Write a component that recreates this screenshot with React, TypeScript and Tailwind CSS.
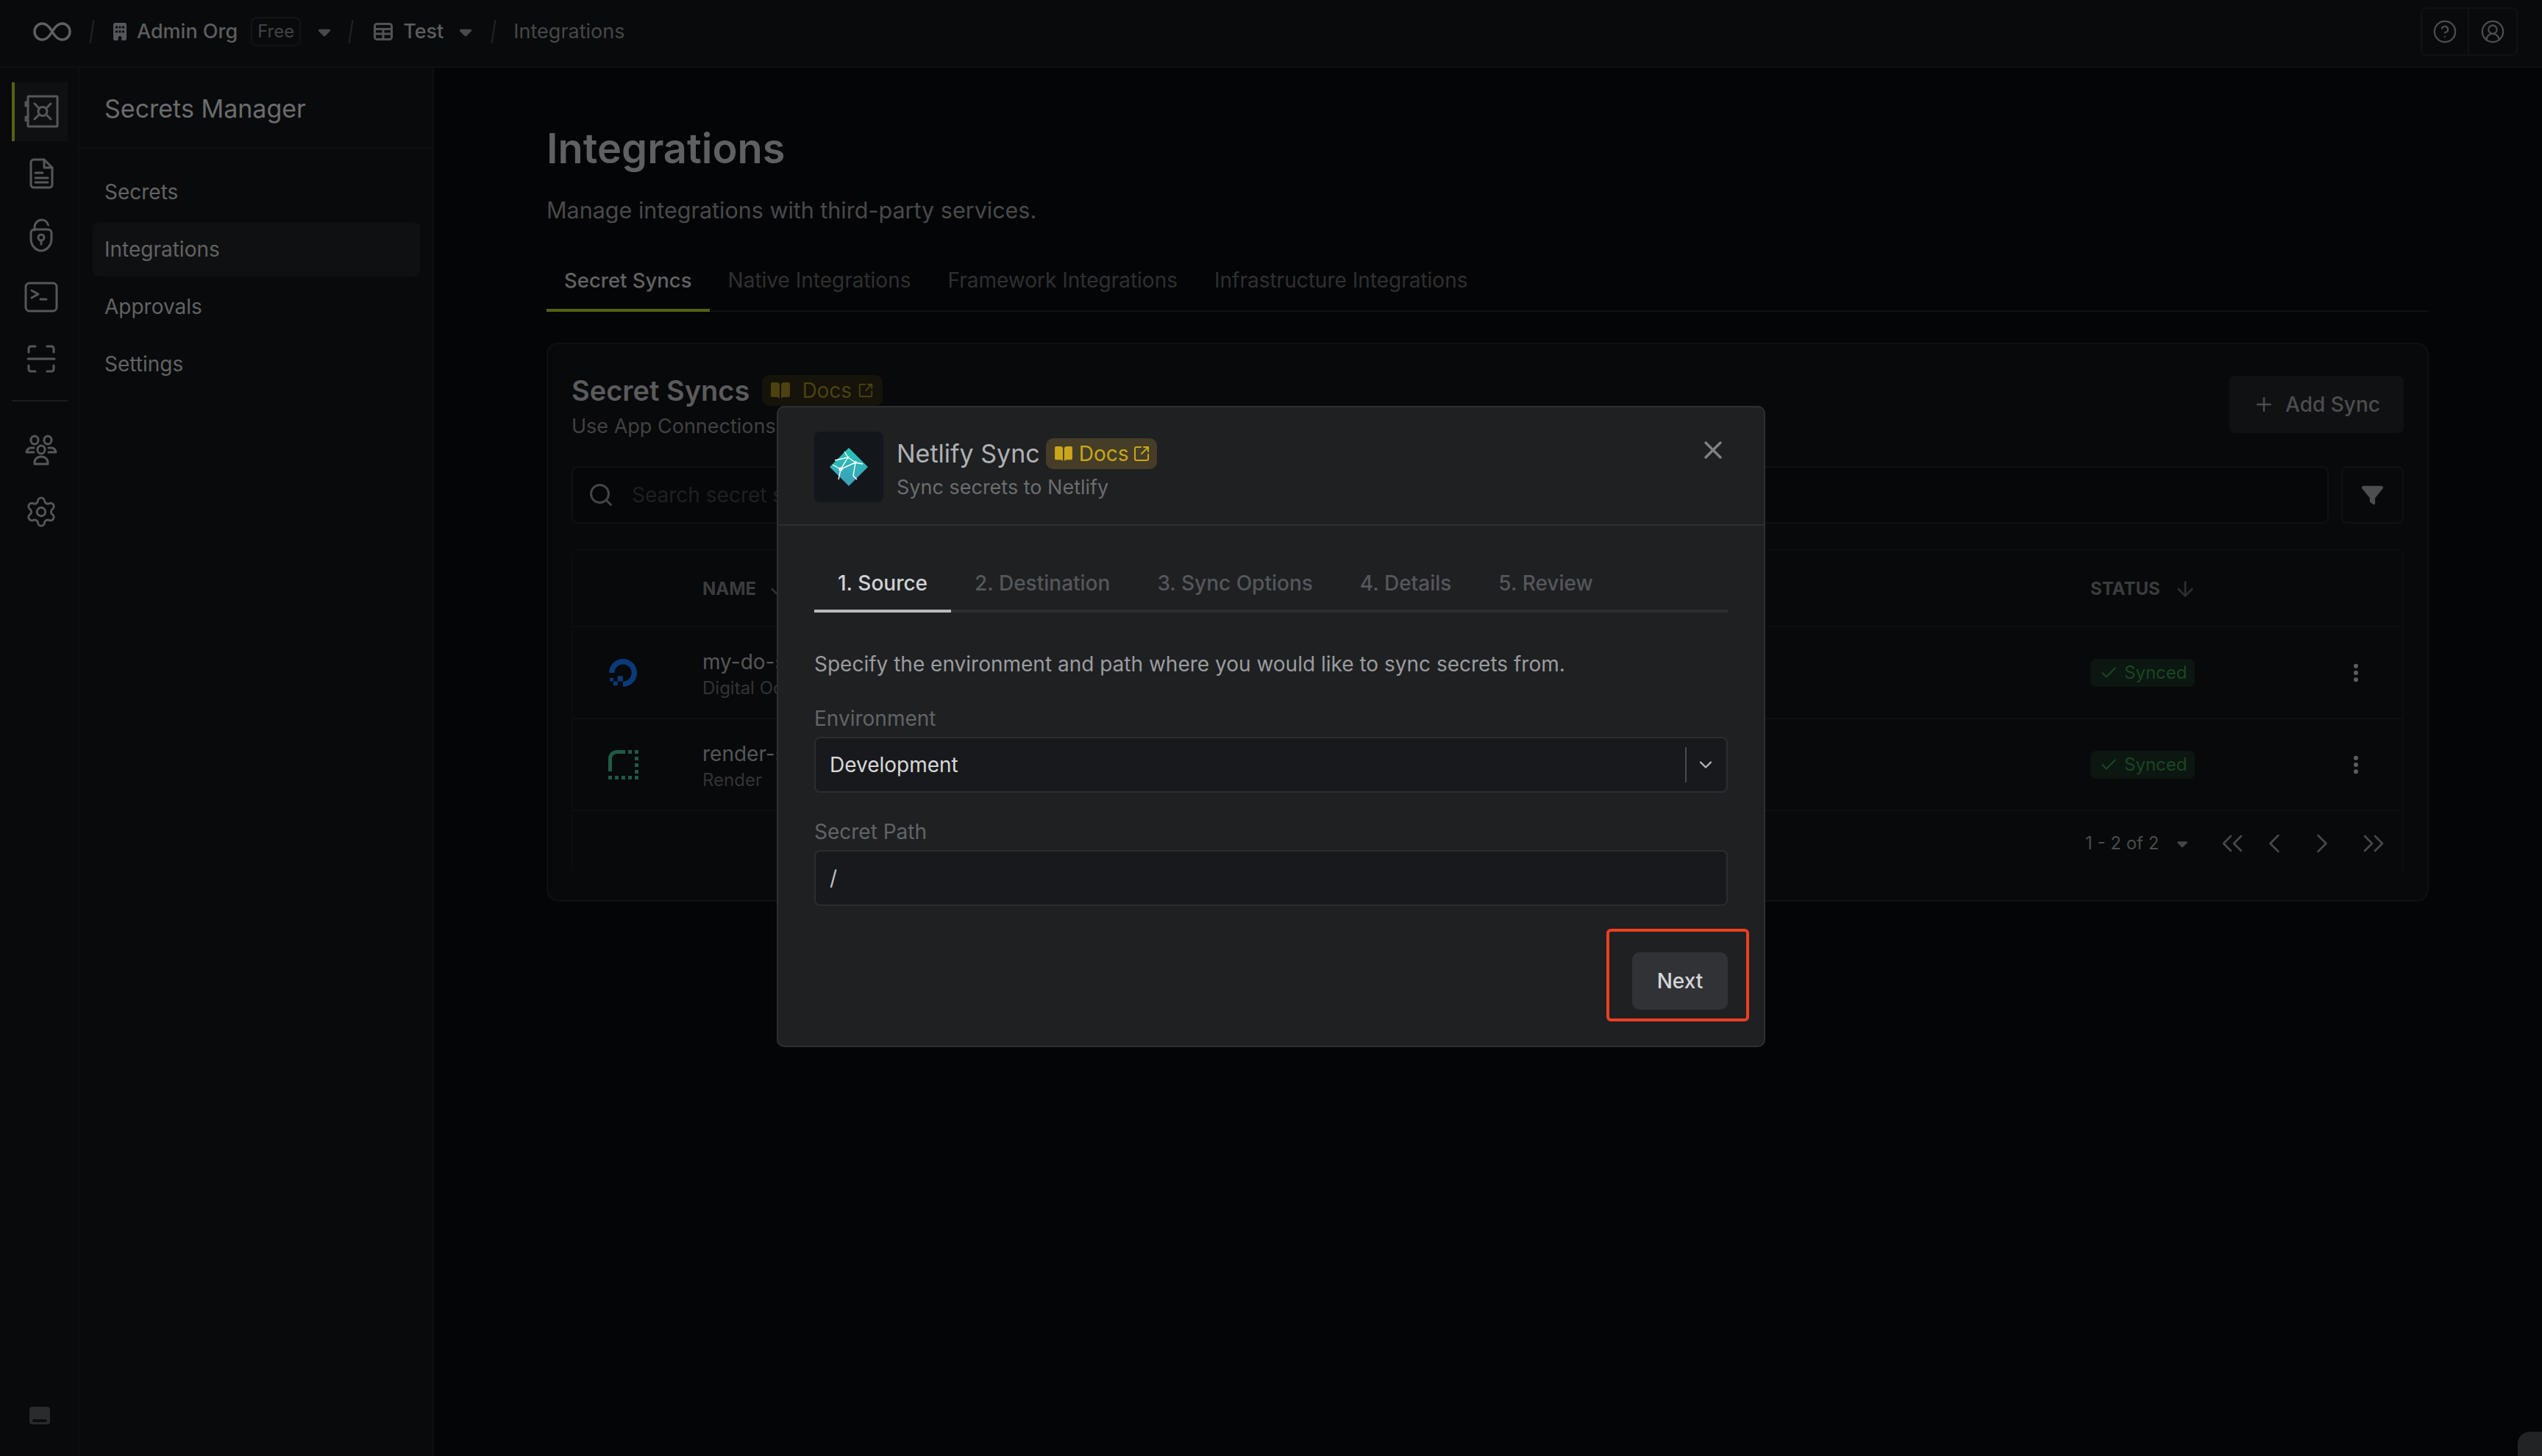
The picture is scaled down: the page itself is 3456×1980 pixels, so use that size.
import { ArrowDown, Check, ChevronDown, ChevronLeft, ChevronRight, ChevronsLeft, ChevronsRight, CircleHelp, CircleUserRound, EllipsisVertical, Plus, Search, Settings, SquareArrowOutUpRight, X } from "lucide-react";
import { FaBuilding, FaCaretDown, FaFilter } from "react-icons/fa6";

function Slash({ className }: { className: string }) {
    return <div className={`h-[32px] w-[2px] rotate-[9deg] bg-[#232425] ${className}`} />;
}

function BookIcon({ className }: { className: string }) {
    return (
        <svg viewBox="0 0 28 24" className={className} fill="currentColor">
            <path d="M1 3c0-1.2.8-2 2-2h6c2.500 0 4 1.200 4 3.500V23c-1-1.300-2.300-2-4-2H3c-1.200 0-2-.8-2-2z" />
            <path d="M27 3c0-1.200-.8-2-2-2h-6c-2.500 0-4 1.200-4 3.500V23c1-1.300 2.300-2 4-2h6c1.200 0 2-.8 2-2z" />
        </svg>
    );
}

function RailIcon({ children, active }: { children: React.ReactNode; active?: boolean }) {
    return (
        <div className={`flex h-[80px] w-[76px] items-center justify-center ${active ? "border-l-4 border-[#576113] bg-[#0f1011]" : "pl-[4px]"}`}>
            {children}
        </div>
    );
}

function Rail() {
    const line = { fill: "none", stroke: "#565758", strokeWidth: 3, strokeLinecap: "round", strokeLinejoin: "round" } as const;
    return (
        <aside className="flex w-[108px] shrink-0 flex-col border-r-2 border-[#0e0f10] bg-[#090a0b] pl-[16px] pt-[20px]">
            <div className="flex flex-col gap-[4px]">
                <RailIcon active>
                    <svg viewBox="0 0 48 46" className="h-[46px] w-[48px]" {...line}>
                        <rect x="6" y="2" width="40" height="41" rx="1" />
                        <path d="M6 10H3v5h3M6 30H3v5h3" />
                        <circle cx="26" cy="22.500" r="6" />
                        <path d="M21 18l-6-6M31 18l6-6M21 27l-6 6M31 27l6 6" />
                    </svg>
                </RailIcon>
                <RailIcon>
                    <svg viewBox="0 0 34 42" className="h-[42px] w-[34px]" {...line}>
                        <path d="M7 2h14l11 11v23a4 4 0 0 1-4 4H7a4 4 0 0 1-4-4V6a4 4 0 0 1 4-4z" />
                        <path d="M21 2v11h11M9 20h10M9 27h17M9 33h17" />
                    </svg>
                </RailIcon>
                <RailIcon>
                    <svg viewBox="0 0 34 48" className="h-[48px] w-[34px]" {...line}>
                        <path d="M8 17v-4c0-5 4-10 9.500-10 4.500 0 8 3 9 7" />
                        <path d="M3 21c0-3 2-5 5-5h18c3 0 5 2 5 5v8c0 9-7 16-14 16S3 38 3 29z" />
                        <circle cx="17" cy="27" r="4" />
                        <path d="M17 31v5" />
                    </svg>
                </RailIcon>
                <RailIcon>
                    <svg viewBox="0 0 46 42" className="h-[42px] w-[46px]" {...line}>
                        <rect x="2" y="2" width="42" height="38" rx="5" />
                        <path d="M10 12l9 5-9 5M22 24h8" />
                    </svg>
                </RailIcon>
                <RailIcon>
                    <svg viewBox="0 0 40 38" className="h-[38px] w-[40px]" {...line}>
                        <path d="M3 10V5a3 3 0 0 1 3-3h6M28 2h6a3 3 0 0 1 3 3v5M3 28v5a3 3 0 0 0 3 3h6M37 28v5a3 3 0 0 1-3 3h-6M2 19h36" />
                    </svg>
                </RailIcon>
            </div>
            <div className="mb-[26px] mt-[16px] h-[2px] w-[76px] bg-[#1b1c1d]" />
            <div className="flex flex-col gap-[4px]">
                <RailIcon>
                    <svg viewBox="0 0 44 42" className="h-[42px] w-[44px]" {...line}>
                        <rect x="8" y="2" width="10" height="11" rx="5" />
                        <rect x="26" y="2" width="10" height="11" rx="5" />
                        <rect x="17" y="15" width="10" height="11" rx="5" />
                        <path d="M13 40v-2c0-5 4-8 9-8s9 3 9 8v2zM12 18H8c-3 0-5 2-6 6h10M32 18h4c3 0 5 2 6 6H32" />
                    </svg>
                </RailIcon>
                <RailIcon>
                    <Settings size={46} color="#565758" strokeWidth={1.500} />
                </RailIcon>
            </div>
            <div className="mb-[43px] ml-[24px] mt-auto flex h-[24px] w-[28px] items-end justify-center rounded-[4px] bg-[#2a2b2c] pb-[3px]">
                <div className="h-[4px] w-[20px] rounded-full bg-[#0c0d0e]" />
            </div>
        </aside>
    );
}

function MenuSidebar() {
    const items = ["Secrets", "Integrations", "Approvals", "Settings"];
    return (
        <aside className="w-[482px] shrink-0 border-r-2 border-[#0e0f10] bg-[#090a0b]">
            <div className="flex h-[110px] items-center border-b-2 border-[#0f1011] pl-[34px] pt-[2px] text-[34px] text-[#6b6c6d]">Secrets Manager</div>
            <nav className="flex flex-col gap-[4px] pl-[18px] pr-[17px] pt-[22px]">
                {items.map((item) => (
                    <div key={item} className={`flex h-[74px] items-center rounded-[8px] pl-[16px] text-[28px] text-[#626364] ${item === "Integrations" ? "bg-[#0f1011]" : ""}`}>
                        {item}
                    </div>
                ))}
            </nav>
        </aside>
    );
}

function SyncRow({ name, app, logo }: { name: string; app: string; logo: React.ReactNode }) {
    return (
        <div className="flex h-[125px] items-center border-b-2 border-[#0e0f10]">
            <div className="flex w-[176px] justify-center pr-[40px]">{logo}</div>
            <div className="flex w-[1887px] flex-col gap-[2px] pt-[6px]">
                <span className="text-[28px] leading-[34px] text-[#555657]">{name}</span>
                <span className="text-[24px] leading-[34px] text-[#333435]">{app}</span>
            </div>
            <div className="flex h-[38px] w-[142px] items-center gap-[8px] rounded-[8px] bg-[#0b1710] pl-[12px] text-[24px] text-[#1c4525]">
                <Check size={26} strokeWidth={2} />
                Synced
            </div>
            <EllipsisVertical size={32} color="#5e5f60" strokeWidth={2.500} className="ml-[203px]" />
        </div>
    );
}

function SecretSyncsCard() {
    return (
        <section className="mt-[42px] h-[760px] rounded-[16px] border-2 border-[#0f1011] bg-[#08090a] px-[32px] pt-[41px]">
            <div className="flex items-start justify-between">
                <div>
                    <div className="flex items-center gap-[17px]">
                        <h2 className="text-[38px] font-semibold leading-[44px] text-[#5a5b5c]">Secret Syncs</h2>
                        <div className="flex h-[42px] w-[164px] items-center gap-[14px] rounded-[10px] bg-[#15130a] pl-[10px] text-[28px] text-[#4b420f]">
                            <BookIcon className="h-[24px] w-[30px]" />
                            Docs
                            <SquareArrowOutUpRight size={22} className="-ml-[6px]" />
                        </div>
                    </div>
                    <p className="mt-[9px] text-[27px] leading-[36px] text-[#404142]">Use App Connections to sync secrets to third-party services.</p>
                </div>
                <div className="mt-[2px] flex h-[78px] w-[237px] items-center justify-center gap-[14px] rounded-[8px] bg-[#101113] text-[28px] font-medium text-[#4c4d4e]">
                    <Plus size={30} strokeWidth={2} />
                    Add Sync
                </div>
            </div>
            <div className="mt-[36px] flex gap-[17px]">
                <div className="flex h-[78px] w-[2389px] items-center rounded-[8px] border-2 border-[#101112] bg-[#060708] pl-[20px] text-[28px] text-[#1f2021]">
                    <Search size={36} color="#444546" strokeWidth={2} />
                    <span className="ml-[24px]">Search secret syncs...</span>
                </div>
                <div className="flex h-[78px] w-[85px] items-center justify-center rounded-[8px] border-2 border-[#101112]">
                    <FaFilter size={29} color="#4d4e4f" />
                </div>
            </div>
            <div className="mt-[35px] rounded-[8px] border-2 border-b-0 border-[#0c0d0e]">
                <div className="flex h-[104px] items-center border-b-2 border-[#0e0f10] pt-[2px] text-[24px] font-bold text-[#3b3c3d]">
                    <span className="ml-[176px] flex w-[1887px] items-center">
                        NAME
                        <ArrowDown size={32} color="#2e2f30" className="ml-[15px]" />
                    </span>
                    <span>STATUS</span>
                    <ArrowDown size={32} color="#2e2f30" className="ml-[18px]" />
                </div>
                <SyncRow
                    name="my-do-sync"
                    app="Digital Ocean"
                    logo={
                        <svg viewBox="0 0 38 38" className="h-[38px] w-[38px]" fill="#0b3a78">
                            <path d="M19 38v-7.400A11.600 11.600 0 1 0 7.400 19H0A19 19 0 1 1 19 38z" />
                            <path d="M19 30.600h-7.400v-7.400H19zM11.600 36.300H5.900v-5.700h5.700zM5.900 30.600H1.100v-4.800h4.800z" />
                        </svg>
                    }
                />
                <SyncRow
                    name="render-sync"
                    app="Render"
                    logo={
                        <svg viewBox="0 0 41 40" className="h-[40px] w-[41px]" fill="#1f5a47">
                            <path d="M0 12C0 5 5 0 12 0h11v5H12c-4 0-7 3-7 7v17H0z" />
                            <path d="M27 0h5v5h-5zM36 0h5v5h-5zM36 9h5v5h-5zM36 18h5v5h-5zM36 27h5v5h-5zM36 35h5v5h-5zM27 35h5v5h-5zM18 35h5v5h-5zM9 35h5v5H9zM0 35h5v5H0z" />
                        </svg>
                    }
                />
                <div className="flex h-[88px] items-center text-[24px] text-[#4a4b4c]">
                    <span className="ml-[2056px]">1 - 2 of 2</span>
                    <FaCaretDown size={22} color="#444546" className="ml-[21px]" />
                    <ChevronsLeft size={48} color="#48494a" className="ml-[33px]" strokeWidth={1.300} />
                    <ChevronLeft size={44} color="#48494a" className="ml-[11px]" strokeWidth={1.400} />
                    <ChevronRight size={44} color="#48494a" className="ml-[21px]" strokeWidth={1.400} />
                    <ChevronsRight size={48} color="#48494a" className="ml-[24px]" strokeWidth={1.300} />
                </div>
            </div>
        </section>
    );
}

function NetlifyLogo() {
    return (
        <svg viewBox="0 0 52 52" className="h-[52px] w-[52px]">
            <defs>
                <linearGradient id="netlify" x1="0" y1="0" x2="0" y2="1">
                    <stop offset="0" stopColor="#25c7b7" />
                    <stop offset="1" stopColor="#409cb9" />
                </linearGradient>
            </defs>
            <polygon points="26,0 52,26 26,52 0,26" fill="url(#netlify)" />
            <path d="M15 29L4 23M15 29L25 13M15 29l-3 14M25 13l-5-8M25 13l10 7M7 17l18-4M35 20l10 2M35 20L15 29M35 20l-3 18 5 5" fill="none" stroke="#fff" strokeWidth="1.400" />
            <circle cx="15" cy="29" r="2.600" fill="#fff" />
            <circle cx="35" cy="20" r="2" fill="#fff" />
            <circle cx="25" cy="13" r="1.500" fill="#fff" />
        </svg>
    );
}

function Field({ label, className, children }: { label: string; className: string; children: React.ReactNode }) {
    return (
        <div className={className}>
            <div className="mb-[5px] text-[28px] leading-[40px] text-[#626466]">{label}</div>
            <div className="flex h-[76px] items-center rounded-[8px] border-2 border-[#2b2d2f] bg-[#18191c] pl-[19px] text-[28px] text-[#d8d9da]">
                {children}
            </div>
        </div>
    );
}

function SyncModal() {
    const tabs = ["1. Source", "2. Destination", "3. Sync Options", "4. Details", "5. Review"];
    return (
        <div className="absolute left-[1056px] top-[552px] h-[872px] w-[1344px] rounded-[10px] border-2 border-[#2d2f31] bg-[#1e2022]">
            <header className="flex h-[161px] items-start border-b-2 border-[#2d2f31] pl-[49px] pr-[49px] pt-[33px]">
                <div className="flex h-[96px] w-[94px] items-center justify-center rounded-[8px] bg-[#13161b]">
                    <NetlifyLogo />
                </div>
                <div className="ml-[18px]">
                    <div className="flex items-center gap-[8px] pt-[8px]">
                        <span className="text-[34px] leading-[44px] text-[#b0b1b3]">Netlify Sync</span>
                        <div className="flex h-[42px] w-[151px] items-center gap-[7px] rounded-[10px] bg-[#453d27] pl-[10px] text-[28px] text-[#c9a71a]">
                            <BookIcon className="h-[22px] w-[28px]" />
                            Docs
                            <SquareArrowOutUpRight size={24} strokeWidth={2} className="-ml-[2px]" />
                        </div>
                    </div>
                    <div className="mt-[6px] text-[27px] leading-[36px] text-[#6c6d6f]">Sync secrets to Netlify</div>
                </div>
                <X size={40} color="#808284" strokeWidth={2} className="ml-auto mt-[5px]" />
            </header>
            <div className="px-[49px]">
                <div className="mt-[48px] flex h-[70px] border-b-4 border-[#2c2e30]">
                    {tabs.map((tab, i) => (
                        <div
                            key={tab}
                            className={`h-[70px] px-[32px] pt-[10px] text-[28px] font-medium leading-[40px] ${i === 0 ? "border-b-4 border-[#b9babb] text-[#d1d2d3]" : "text-[#55575a]"}`}
                        >
                            {tab}
                        </div>
                    ))}
                </div>
                <p className="mt-[50px] text-[28px] leading-[40px] text-[#9b9c9e]">Specify the environment and path where you would like to sync secrets from.</p>
                <Field label="Environment" className="mt-[34px]">
                    <span className="flex-1">Development</span>
                    <div className="h-[48px] w-[2px] bg-[#48494b]" />
                    <ChevronDown size={28} color="#b5b6b7" strokeWidth={2} className="ml-[12px] mr-[14px]" />
                </Field>
                <Field label="Secret Path" className="mt-[33px]">
                    <span className="text-[#c0c1c2]">/</span>
                </Field>
                <div className="mt-[63px] flex justify-end">
                    <div className="flex h-[78px] w-[130px] items-center justify-center rounded-[10px] bg-[#303236] text-[28px] font-medium text-[#d5d6d7]">Next</div>
                </div>
            </div>
        </div>
    );
}

export default function App() {
    const inactiveTab = "px-[25px] pt-[9px] leading-[40px]";
    return (
        <div className="relative flex h-[1980px] w-[3456px] flex-col overflow-hidden bg-[#040506] [font-family:Inter,sans-serif]">
            <header className="flex h-[92px] shrink-0 items-center border-b-2 border-[#0f1011] bg-[#090a0b] pb-[4px]">
                <svg viewBox="0 0 52 26" className="ml-[45px] h-[26px] w-[52px]" fill="none" stroke="#5f6061" strokeWidth="3.400">
                    <path d="M26 13C22 6 18 2 12.500 2 6.500 2 2 7 2 13s4.500 11 10.500 11C18 24 22 20 26 13c4-7 8-11 13.500-11C45.500 2 50 7 50 13s-4.500 11-10.500 11C34 24 30 20 26 13z" />
                </svg>
                <Slash className="ml-[27px]" />
                <FaBuilding size={24} color="#55565a" className="ml-[25px]" />
                <span className="ml-[11px] text-[27px] font-medium text-[#5c5d5e]">Admin Org</span>
                <span className="ml-[18px] flex h-[40px] w-[68px] items-center justify-center rounded-[8px] border-2 border-[#131415] text-[24px] text-[#424344]">Free</span>
                <FaCaretDown size={26} color="#48494a" className="ml-[19px]" />
                <Slash className="ml-[22px]" />
                <svg viewBox="0 0 26 24" className="ml-[30px] h-[24px] w-[26px]" fill="none" stroke="#515253" strokeWidth="3">
                    <rect x="1.500" y="1.500" width="23" height="21" rx="3" />
                    <path d="M1.500 8.500h23M13 8.500v14M1.500 15h23" />
                </svg>
                <span className="ml-[14px] text-[27px] font-medium text-[#5c5d5e]">Test</span>
                <FaCaretDown size={26} color="#48494a" className="ml-[17px]" />
                <Slash className="ml-[24px]" />
                <span className="ml-[26px] text-[27px] text-[#464748]">Integrations</span>
                <div className="ml-auto mr-[33px] flex h-[66px] w-[132px] rounded-[8px] border-2 border-[#111213]">
                    <div className="flex w-[66px] items-center justify-center border-r-2 border-[#111213]">
                        <CircleHelp size={34} color="#4c4d4e" strokeWidth={1.600} />
                    </div>
                    <div className="flex w-[66px] items-center justify-center">
                        <CircleUserRound size={34} color="#4c4d4e" strokeWidth={1.600} />
                    </div>
                </div>
            </header>
            <div className="flex flex-1">
                <Rail />
                <MenuSidebar />
                <main className="flex-1 pl-[153px] pr-[155px] pt-[74px]">
                    <h1 className="text-[56px] font-semibold leading-[72px] text-[#5f6061]">Integrations</h1>
                    <p className="mt-[26px] text-[30.500px] leading-[44px] text-[#48494a]">Manage integrations with third-party services.</p>
                    <div className="mt-[44px] flex h-[72px] border-b-2 border-[#101112] text-[28px] text-[#2f3031]">
                        <div className="h-[72px] border-b-4 border-[#576113] px-[24px] pt-[9px] text-[27.500px] font-medium leading-[40px] text-[#626364]">Secret Syncs</div>
                        <div className={inactiveTab}>Native Integrations</div>
                        <div className={inactiveTab}>Framework Integrations</div>
                        <div className={inactiveTab}>Infrastructure Integrations</div>
                    </div>
                    <SecretSyncsCard />
                </main>
            </div>
            <SyncModal />
            <div className="absolute left-[2184px] top-[1263px] h-[126px] w-[194px] rounded-[6px] border-4 border-[#ee3f22]" />
            <div className="absolute bottom-0 right-0 h-[33px] w-[33px] rounded-tl-[16px] bg-[#222324]" />
        </div>
    );
}
